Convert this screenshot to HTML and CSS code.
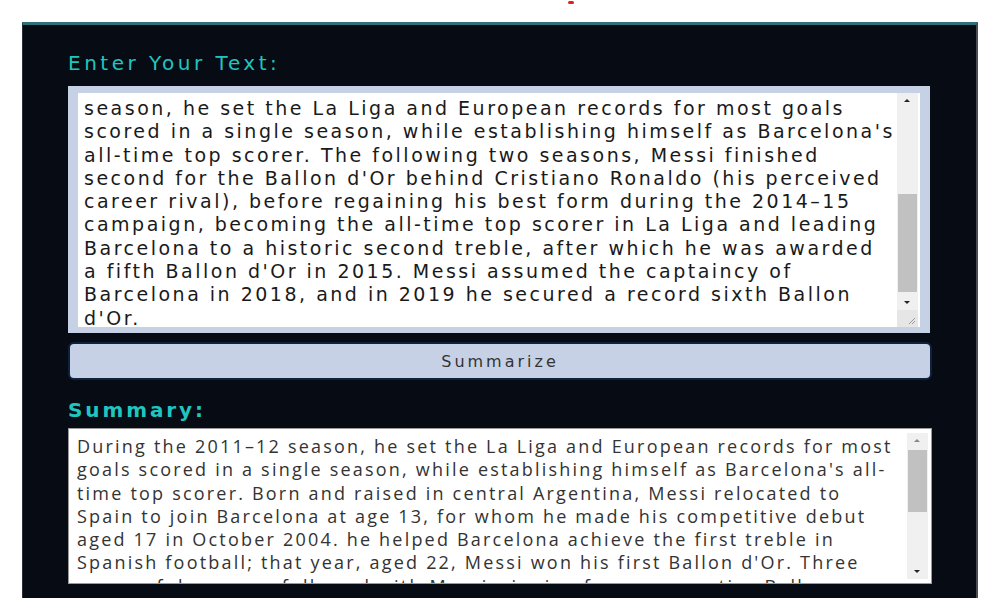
FILE: index.html
```html
<!DOCTYPE html>
<html>
<head>
<meta charset="utf-8">
<link rel="stylesheet" href="styles.css">
</head>
<body>
<div class="page">
  <div class="dot"></div>
  <div class="panel">
    <h2 class="label label-first">Enter Your Text:</h2>
    <div class="input-frame">
      <div class="input-box">
        <div class="input-text">
          <div class="ln">season, he set the La Liga and European records for most goals</div>
          <div class="ln">scored in a single season, while establishing himself as Barcelona's</div>
          <div class="ln">all-time top scorer. The following two seasons, Messi finished</div>
          <div class="ln">second for the Ballon d'Or behind Cristiano Ronaldo (his perceived</div>
          <div class="ln">career rival), before regaining his best form during the 2014–15</div>
          <div class="ln">campaign, becoming the all-time top scorer in La Liga and leading</div>
          <div class="ln">Barcelona to a historic second treble, after which he was awarded</div>
          <div class="ln">a fifth Ballon d'Or in 2015. Messi assumed the captaincy of</div>
          <div class="ln">Barcelona in 2018, and in 2019 he secured a record sixth Ballon</div>
          <div class="ln">d'Or.</div>
        </div>
        <div class="scroll scroll-in">
          <div class="arrow up"></div>
          <div class="track"><div class="thumb thumb-in"></div></div>
          <div class="arrow down"></div>
          <div class="grip">
            <svg width="10" height="10" viewBox="0 0 10 10"><path d="M9 3 L3 9 M9 6 L6 9" stroke="#9a9a9a" stroke-width="1"/></svg>
          </div>
        </div>
      </div>
    </div>
    <button class="btn">Summarize</button>
    <h2 class="label label-second">Summary:</h2>
    <div class="summary-box">
      <div class="summary-text">
        <div class="ln">During the 2011–12 season, he set the La Liga and European records for most</div>
        <div class="ln">goals scored in a single season, while establishing himself as Barcelona's all-</div>
        <div class="ln">time top scorer. Born and raised in central Argentina, Messi relocated to</div>
        <div class="ln">Spain to join Barcelona at age 13, for whom he made his competitive debut</div>
        <div class="ln">aged 17 in October 2004. he helped Barcelona achieve the first treble in</div>
        <div class="ln">Spanish football; that year, aged 22, Messi won his first Ballon d'Or. Three</div>
        <div class="ln">successful seasons followed with Messi winning four consecutive Ballons</div>
      </div>
      <div class="scroll scroll-sum">
        <div class="arrow up small"></div>
        <div class="track"><div class="thumb thumb-sum"></div></div>
        <div class="arrow down"></div>
      </div>
    </div>
  </div>
</div>
</body>
</html>
```
FILE: styles.css
```css
* { box-sizing: border-box; }
html, body {
  margin: 0;
  padding: 0;
  background: #ffffff;
  width: 1000px;
  height: 600px;
  overflow: hidden;
}
.page {
  position: relative;
  width: 1000px;
  height: 600px;
  padding: 22px 22px 0 22px;
}
.dot {
  position: absolute;
  left: 568px;
  top: 1px;
  width: 6px;
  height: 3px;
  border-radius: 2px;
  background: #e02020;
}
.panel {
  width: 956px;
  height: 576px;
  background: #070b13;
  border-top: 3px solid #2f6f78;
  border-right: 2px solid #4a4d52;
  border-left: 1px solid #2a2d33;
  padding: 26px 0 0 45px;
  display: flex;
  flex-direction: column;
  overflow: hidden;
}
.label {
  margin: 0;
  font-family: "DejaVu Sans", sans-serif;
  font-weight: normal;
  color: #1fc6c0;
  font-size: 20px;
  letter-spacing: 3.5px;
  line-height: 24px;
}
.label-first { margin-bottom: 11px; height: 24px; }
.label-second { margin-top: 18px; margin-bottom: 6px; font-weight: bold; letter-spacing: 2.9px; }

.input-frame {
  width: 862px;
  height: 247px;
  background: #c6d1e6;
  padding: 7px 10px 6px 10px;
}
.input-box {
  height: 100%;
  background: #ffffff;
  display: flex;
  overflow: hidden;
}
.input-text {
  flex: 1;
  padding: 4px 0 0 6px;
  font-family: "DejaVu Sans", sans-serif;
  font-size: 19px;
  letter-spacing: 2.5px;
  line-height: 23.3px;
  color: #1a1a1a;
  overflow: hidden;
}
.ln { white-space: nowrap; }

.scroll {
  display: flex;
  flex-direction: column;
  background: #f0f0f0;
  flex: none;
}
.scroll-in { width: 21px; margin-right: 2px; }
.scroll-sum { width: 21px; margin: 4px 3px 4px 0; }
.arrow {
  height: 15px;
  position: relative;
}
.arrow::after {
  content: "";
  position: absolute;
  left: 7px;
  width: 0; height: 0;
  border-left: 3px solid transparent;
  border-right: 3px solid transparent;
}
.arrow.up::after { top: 6px; border-bottom: 3px solid #222; }
.arrow.up.small::after { border-bottom-color: #888; }
.arrow.down::after { top: 6px; border-top: 3px solid #222; }
.track { flex: 1; position: relative; }
.thumb {
  position: absolute;
  left: 1px;
  right: 1px;
  background: #c1c1c1;
}
.thumb-in { top: 86px; height: 98px; }
.thumb-sum { top: 2px; height: 62px; }
.grip {
  height: 17px;
  background: #e6e6e6;
  display: flex;
  align-items: flex-end;
  justify-content: flex-end;
  padding: 0 2px 2px 0;
}

.btn {
  margin-top: 9px;
  width: 864px;
  height: 38px;
  background: #c7d1e6;
  border: 2px solid #10213f;
  border-radius: 6px;
  font-family: "DejaVu Sans", sans-serif;
  font-size: 16px;
  letter-spacing: 3px;
  color: #333;
  padding: 0;
}

.summary-box {
  width: 864px;
  height: 156px;
  background: #ffffff;
  border: 1px solid #9a9a9a;
  display: flex;
  overflow: hidden;
}
.summary-text {
  flex: 1;
  padding: 6px 0 0 8px;
  font-family: "Open Sans", sans-serif;
  font-size: 18px;
  letter-spacing: 2.2px;
  line-height: 23.3px;
  color: #333333;
  overflow: hidden;
}
```
